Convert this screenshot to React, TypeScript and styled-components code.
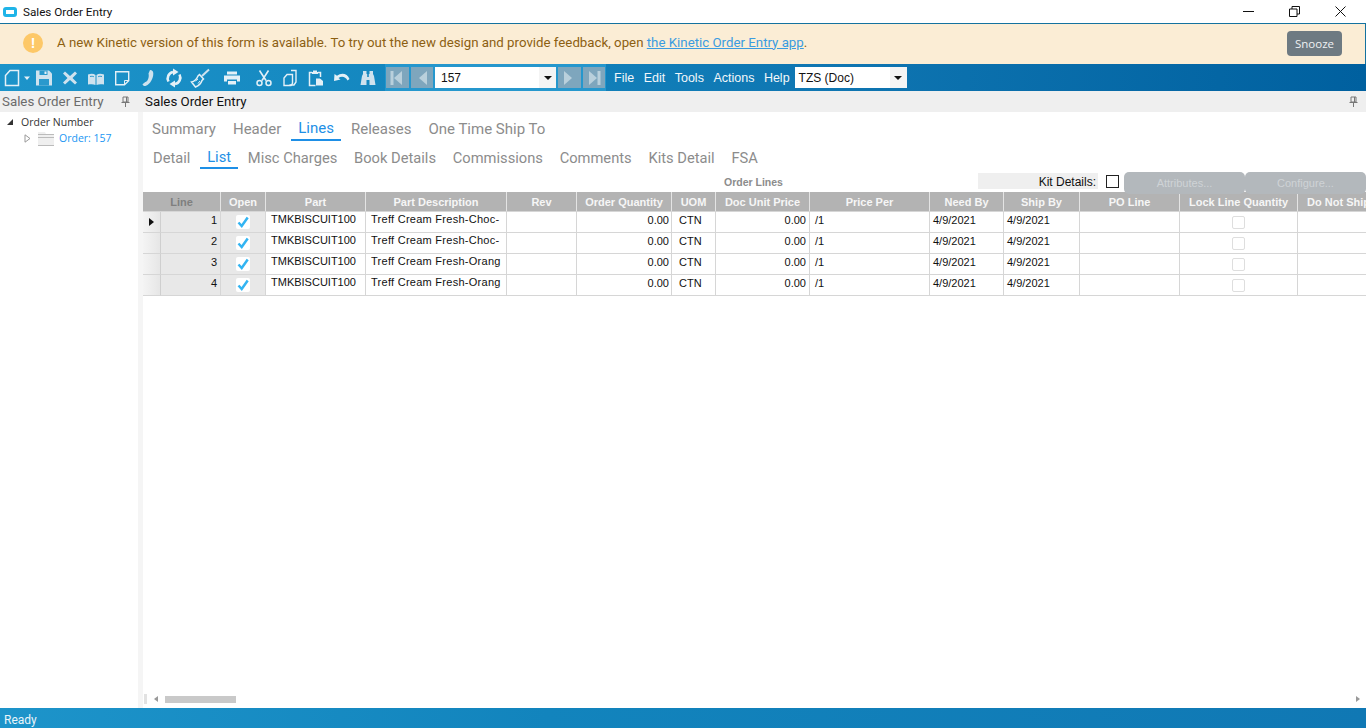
import React from 'react'
import styled, { createGlobalStyle } from 'styled-components'

const GlobalStyle = createGlobalStyle`
  html, body { margin: 0; padding: 0; height: 100%; background: #fff; overflow: hidden; }
  #root { height: 100%; }
`

const uiFont = `Roboto, "Open Sans", sans-serif`
const treeFont = `"Open Sans", "Noto Sans", sans-serif`
const gridFont = `"Liberation Sans", Arial, sans-serif`
const columns = '18px 60px 45px 100px 141px 70px 95px 44px 94px 120px 74px 76px 100px 118px 82px'

const Page = styled.div`
  width: 1366px;
  height: 728px;
  display: flex;
  flex-direction: column;
  overflow: hidden;
  font-family: ${uiFont};
`

const TitleBar = styled.div`
  height: 23px;
  flex: none;
  display: flex;
  align-items: center;
  padding-left: 3px;
  background: #fff;
  border-bottom: 1px solid #14729f;
`
const AppIcon = styled.span`
  width: 14px;
  height: 10px;
  box-sizing: border-box;
  border: 3px solid #1fb4e8;
  border-radius: 3px;
  background: #fff;
  margin-right: 6px;
`
const TitleText = styled.span`
  font-size: 11.7px;
  color: #111;
  flex: 1;
  margin-top: 1px;
`
const WinButtons = styled.div`
  display: flex;
  align-items: center;
  margin-right: 3px;
`
const WinButton = styled.span`
  width: 46px;
  height: 20px;
  display: flex;
  align-items: center;
  justify-content: center;
`

const Banner = styled.div`
  height: 40px;
  flex: none;
  box-sizing: border-box;
  display: flex;
  align-items: center;
  padding: 0 23px 2px 23px;
  background: #fbedd5;
  border-right: 1px solid #14729f;
`
const WarnDot = styled.span`
  width: 20px;
  height: 20px;
  border-radius: 50%;
  background: #fdc868;
  color: #fff;
  font: bold 14px/20px ${gridFont};
  text-align: center;
  margin-right: 14px;
`
const BannerText = styled.span`
  font-size: 13.27px;
  color: #8c5f12;
  flex: 1;
  white-space: nowrap;
  margin-top: -2px;
`
const BannerLink = styled.a`
  color: #3b9ce0;
  text-decoration: underline;
`
const Snooze = styled.button`
  width: 55px;
  height: 25px;
  margin-top: 1px;
  border: 0;
  padding: 0;
  border-radius: 4px;
  background: #6e7a82;
  color: #eef1f3;
  font: 11.5px ${treeFont};
`

const Toolbar = styled.div`
  height: 27px;
  flex: none;
  display: flex;
  align-items: center;
  background: linear-gradient(90deg, #1d94ca 0%, #1284bd 35%, #0f76b2 60%, #00609f 100%);
`
const ToolGroup = styled.div`
  display: flex;
  align-items: center;
  width: 385px;
  padding-left: 2px;
  box-sizing: border-box;
`
const ToolSlot = styled.span<{ $w?: number }>`
  width: ${p => p.$w ?? 26}px;
  height: 27px;
  flex: none;
  display: flex;
  align-items: center;
  justify-content: center;
`
const NavGroup = styled.div`
  width: 221px;
  height: 27px;
  box-sizing: border-box;
  display: flex;
  align-items: center;
  gap: 2px;
  padding: 0 1px;
  background: #2597cd;
`
const NavButton = styled.span`
  width: 22.5px;
  height: 21px;
  display: flex;
  align-items: center;
  justify-content: center;
  background: #7ea6bd;
`
const Combo = styled.div<{ $w: number; $pad?: number }>`
  width: ${p => p.$w}px;
  height: 21px;
  flex: none;
  display: flex;
  align-items: center;
  background: #fff;
  font: 12px ${gridFont};
  color: #111;
  padding-left: ${p => p.$pad ?? 4}px;
  box-sizing: border-box;
`
const ComboText = styled.span`
  flex: 1;
  margin-top: 1px;
`
const ComboArrow = styled.span`
  width: 17px;
  height: 100%;
  display: flex;
  align-items: center;
  justify-content: center;
  background: #f4f4f4;
`
const Caret = styled.i`
  display: block;
  width: 0;
  height: 0;
  border-left: 4px solid transparent;
  border-right: 4px solid transparent;
  border-top: 4px solid #111;
`
const Menu = styled.div`
  display: flex;
  align-items: center;
  margin-left: 8px;
  gap: 9.5px;
  margin-right: 5px;
`
const MenuItem = styled.span`
  margin-top: 1px;
  font: 12.5px ${gridFont};
  color: #f2f7fa;
`

const Panes = styled.div`
  flex: 1;
  min-height: 0;
  display: flex;
  background: #f5f5f5;
`
const LeftPane = styled.div`
  width: 138px;
  flex: none;
  background: #fff;
`
const PaneHead = styled.div`
  height: 21px;
  display: flex;
  align-items: center;
  background: #efefef;
  justify-content: space-between;
`
const PaneTitle = styled.span<{ $dark?: boolean }>`
  font-size: 13.3px;
  color: ${p => (p.$dark ? '#111' : '#6b6b6b')};
  margin-left: ${p => (p.$dark ? 7 : 2)}px;
  white-space: nowrap;
`
const PinSlot = styled.span`
  display: flex;
  margin-right: 8px;
`
const Tree = styled.div`
  padding: 2px 0 0 6px;
  font: 11px/16px ${treeFont};
`
const TreeRow = styled.div<{ $indent?: number }>`
  display: flex;
  align-items: center;
  height: 16px;
  padding-left: ${p => p.$indent ?? 0}px;
  font-size: 10.5px;
  color: #333;
`
const TreeLabel = styled.span<{ $blue?: boolean; $gap: number }>`
  margin-left: ${p => p.$gap}px;
  color: ${p => (p.$blue ? '#2196f3' : '#333')};
`

const MainPane = styled.div`
  width: 1228px;
  flex: none;
  display: flex;
  flex-direction: column;
`
const Content = styled.div`
  flex: 1;
  min-height: 0;
  margin-left: 5px;
  display: flex;
  flex-direction: column;
  background: #fff;
  position: relative;
`
const TabRow = styled.div<{ $pad: number; $top: number; $gap: number }>`
  display: flex;
  height: 29px;
  box-sizing: border-box;
  gap: ${p => p.$gap}px;
  padding: ${p => p.$top}px 0 0 ${p => p.$pad}px;
  align-items: flex-start;
`
const Tab = styled.span<{ $active?: boolean; $low?: boolean }>`
  height: 22px;
  line-height: ${p => 22 + (p.$low ? 2 : 0) + (p.$active ? 0 : 2)}px;
  padding: 0 7px;
  font-size: ${p => (p.$low ? 14.7 : 15)}px;
  white-space: nowrap;
  color: ${p => (p.$active ? '#1e8fe6' : '#8c8c8c')};
  border-bottom: 2px solid ${p => (p.$active ? '#1e8fe6' : 'transparent')};
`
const GridBar = styled.div`
  height: 22px;
  display: flex;
  align-items: center;
  position: relative;
  z-index: 1;
`
const GridTitle = styled.span`
  margin: 1px 0 0 581px;
  width: 254px;
  font: bold 10.5px ${gridFont};
  color: #8c8c8c;
`
const KitLabel = styled.span`
  width: 120px;
  height: 16px;
  box-sizing: border-box;
  padding-right: 2px;
  background: #efefef;
  text-align: right;
  font: 12px/18px ${gridFont};
  color: #111;
`
const KitBox = styled.span`
  width: 13px;
  height: 13px;
  box-sizing: border-box;
  margin: 1px 5px 0 8px;
  border: 1px solid #222;
  background: #fff;
  flex: none;
`
const GreyButton = styled.span`
  width: 121px;
  height: 22px;
  margin-top: 4px;
  flex: none;
  border-radius: 5px;
  background: #b3b8bc;
  color: #cfd3d6;
  font: 11px/22px ${gridFont};
  text-align: center;
`
const GridTable = styled.div`
  width: 1223px;
  overflow: hidden;
  flex: none;
`
const HeadRow = styled.div`
  display: grid;
  grid-template-columns: ${columns};
  height: 20px;
  box-sizing: border-box;
  border-bottom: 1px solid #d6d6d6;
  background: #b3b3b3;
`
const HeadCell = styled.div<{ $span?: number; $dim?: boolean }>`
  grid-column: span ${p => p.$span ?? 1};
  box-sizing: border-box;
  border-right: 1px solid #e4e4e4;
  font: bold 11px/20px ${gridFont};
  color: ${p => (p.$dim ? '#7f7f7f' : '#f6f6f6')};
  text-align: center;
  white-space: nowrap;
  overflow: hidden;
`
const BodyRow = styled.div`
  display: grid;
  grid-template-columns: ${columns};
  height: 21px;
`
const Cell = styled.div<{ $align?: string; $high?: boolean; $pad?: number; $wide?: boolean }>`
  box-sizing: border-box;
  border-right: 1px solid #d6d6d6;
  border-bottom: 1px solid #d6d6d6;
  font: 11px/${p => (p.$high ? 15 : 17)}px ${gridFont};
  letter-spacing: ${p => (p.$wide ? 0.27 : 0)}px;
  color: #111;
  padding: 0 ${p => p.$pad ?? 5}px;
  text-align: ${p => p.$align ?? 'left'};
  white-space: nowrap;
  overflow: hidden;
  display: block;
`
const SelectorCell = styled.div`
  box-sizing: border-box;
  display: flex;
  align-items: center;
  padding-left: 6px;
  background: linear-gradient(90deg, #f4f4f4, #e6e6e6);
  border-right: 1px solid #cfcfcf;
  border-bottom: 1px solid #d6d6d6;
`
const RowArrow = styled.i`
  display: block;
  width: 0;
  height: 0;
  border-top: 4px solid transparent;
  border-bottom: 4px solid transparent;
  border-left: 5px solid #111;
`
const LineCell = styled(Cell)`
  background: #e8e8e8;
  text-align: right;
  padding-right: 3px;
`
const BoxCell = styled.div`
  box-sizing: border-box;
  display: flex;
  align-items: center;
  justify-content: center;
  border-right: 1px solid #d6d6d6;
  border-bottom: 1px solid #d6d6d6;
`
const OpenCell = styled(BoxCell)`
  background: #e8e8e8;
`
const CheckFace = styled.span`
  width: 14px;
  height: 14px;
  display: flex;
  border-radius: 2px;
  background: #fff;
`
const LockBox = styled.span`
  width: 13px;
  height: 13px;
  box-sizing: border-box;
  border: 1px solid #dedede;
  border-radius: 2px;
`
const HScroll = styled.div`
  position: absolute;
  left: 0;
  right: 0;
  bottom: 5px;
  height: 8px;
  display: flex;
  align-items: center;
`
const ScrollCap = styled.span`
  width: 3px;
  height: 10px;
  margin-left: 1px;
  background: #e2e2e2;
`
const ScrollArrow = styled.i<{ $right?: boolean }>`
  display: block;
  width: 0;
  height: 0;
  margin-left: ${p => (p.$right ? 'auto' : '7px')};
  margin-right: ${p => (p.$right ? '6px' : '0')};
  border-top: 3px solid transparent;
  border-bottom: 3px solid transparent;
  ${p => (p.$right ? 'border-left: 4px solid #999;' : 'border-right: 4px solid #999;')}
`
const ScrollThumb = styled.span`
  width: 71px;
  height: 7px;
  margin-left: 7px;
  background: #c9c9c9;
`
const StatusBar = styled.div`
  height: 20px;
  flex: none;
  box-sizing: border-box;
  display: flex;
  align-items: center;
  padding: 3px 0 0 4px;
  background: linear-gradient(90deg, #1d94ca 0%, #1284bd 40%, #1078b4 100%);
  color: #eaf4f9;
  font: 12px ${uiFont};
`

const ico = '#e4f0f7'
const icoDim = '#cfe2ee'

const Svg = ({ w = 18, h = 18, vb = '0 0 18 18', children }: { w?: number; h?: number; vb?: string; children: React.ReactNode }) => (
  <svg width={w} height={h} viewBox={vb} fill="none">
    {children}
  </svg>
)

const toolIcons: { w?: number; el: React.ReactNode }[] = [
  {
    w: 19,
    el: (
      <Svg>
        <path d="M7 1.500h8.500v15H2.500V6.500Z" stroke={ico} strokeWidth="1.500" />
      </Svg>
    ),
  },
  {
    w: 12,
    el: (
      <Svg w={8} h={6} vb="0 0 8 6">
        <path d="M1 1.500h6L4 5Z" fill={ico} />
      </Svg>
    ),
  },
  {
    w: 24,
    el: (
      <Svg vb="1 0 18 18">
        <path d="M1 1.500h13l3 3v12H1Z" fill={icoDim} />
        <path d="M4.500 1.500h8v4.500h-8ZM4 10h10v6.500H4Z" fill="#2a99cd" />
        <path d="M9.500 2.500h2v2.500h-2Z" fill={ico} />
      </Svg>
    ),
  },
  {
    el: (
      <Svg>
        <path d="M4 2.500 9 7l5-4.500 2 2L11.500 9l4.500 4.500-2 2-5-4.500-5 4.500-2-2L6.500 9 2 4.500Z" fill={icoDim} />
      </Svg>
    ),
  },
  {
    el: (
      <Svg>
        <path d="M1 5.500c3-1 5.500-1 7.500.5v10C6.500 15 4 15 1 15.500ZM17 5.500c-3-1-5.500-1-7.500.5v10c2-1 4.500-1 7.500-.5Z" fill={icoDim} />
        <path d="M3 7.500c1.500-.3 3-.3 4 .3M11 7.800c1-.6 2.500-.6 4-.3" stroke="#2a99cd" />
      </Svg>
    ),
  },
  {
    el: (
      <Svg>
        <path d="M2.700 2.700h13v9L11.500 15.700H2.700Z" stroke={ico} strokeWidth="1.400" />
        <path d="M15.500 11.500h-4v4" stroke={ico} />
      </Svg>
    ),
  },
  {
    el: (
      <Svg>
        <path d="M11 1c2.300.3 3.300 1.200 3.300 3.500 0 5-3 10.500-7.300 12.300-1.700.5-3 0-3.500-1.600l2.800-2.200c1.800.2 4.300-4.300 3.200-8.500Z" fill={icoDim} />
      </Svg>
    ),
  },
  {
    el: (
      <Svg w={20} h={20} vb="0 0 20 20">
        <path d="M4.500 13.500A6.500 6.500 0 0 1 9 4" stroke={ico} strokeWidth="2.600" />
        <path d="M9 .5l5.500 3.500L9 7.500Z" fill={ico} />
        <path d="M15.500 6.500A6.500 6.500 0 0 1 11 16" stroke={ico} strokeWidth="2.600" />
        <path d="M11 12.500 5.500 16l5.500 3.500Z" fill={ico} />
      </Svg>
    ),
  },
  {
    el: (
      <Svg w={20} h={20} vb="0 0 20 20">
        <path d="M19 1.500 12 8" stroke={icoDim} strokeWidth="2" />
        <path d="M9.500 6.500 13.500 11l-1.500 1.500c-1 3-4 5.500-6.500 6.500L1.500 14c2.500-.5 5-2.500 6.500-6Z" stroke={ico} strokeWidth="1.500" />
        <path d="M5.500 13 8 11M8 15.500l2-2.500" stroke={ico} />
      </Svg>
    ),
  },
  {
    w: 38,
    el: (
      <Svg>
        <path d="M4 2.500h10v3H4Z" fill={ico} />
        <path d="M1 6.500h16v6h-3V10.500H4v2H1Z" fill={ico} />
        <path d="M5 12h8v3.500H5Z" fill={ico} />
      </Svg>
    ),
  },
  {
    el: (
      <Svg>
        <path d="M4.500 1.500 11 11.500M13.500 1.500 7 11.500" stroke={ico} strokeWidth="1.600" />
        <circle cx="4.500" cy="14" r="2.500" stroke={ico} strokeWidth="1.500" />
        <circle cx="13.500" cy="14" r="2.500" stroke={ico} strokeWidth="1.500" />
      </Svg>
    ),
  },
  {
    el: (
      <Svg>
        <path d="M10 1.500h5v11.500l-2 3H8.500" stroke={ico} strokeWidth="1.400" />
        <path d="M6 5.500h5.500v9L10 16.500H3V9Z" stroke={ico} strokeWidth="1.400" />
      </Svg>
    ),
  },
  {
    el: (
      <Svg>
        <path d="M5 3.500H2.500v13h6M11 3.500h2.500V8" stroke={ico} strokeWidth="1.500" />
        <path d="M6 1.500h4v1.500h1v2H5V3h1Z" fill={ico} />
        <path d="M9 9.500h4l3 2.500v4.500H9Z" fill={ico} />
      </Svg>
    ),
  },
  {
    el: (
      <Svg>
        <path d="M1.500 5 1 12l6.500-1.500L5.500 9c3-2.200 7-1.500 9 2.500L16.500 10C14.500 4.500 8.500 3 4 6.800Z" fill={ico} />
      </Svg>
    ),
  },
  {
    el: (
      <Svg>
        <path d="M4 2h3.500v3H8.200v3h1.600V5h.7V2H14v3l1 2 1.500 9h-6v-5h-3v5h-6l1.500-9 1-2Z" fill={icoDim} />
      </Svg>
    ),
  },
]

const NavIcon = ({ dir, bar }: { dir: 'l' | 'r'; bar?: boolean }) => (
  <Svg w={16} h={18} vb="0 0 16 18">
    {dir === 'l' ? <path d="M13 2v14L5 9Z" fill="#b9d0dc" /> : <path d="M3 2v14l8-7Z" fill="#b9d0dc" />}
    {bar && (dir === 'l' ? <path d="M1.500 2h3v14h-3Z" fill="#b9d0dc" /> : <path d="M11.500 2h3v14h-3Z" fill="#b9d0dc" />)}
  </Svg>
)

const Pin = () => (
  <svg width="9" height="11" viewBox="0 0 9 11" fill="none">
    <path d="M2 1h5v5H2ZM0.500 6.500h8M4.500 7v4M5.500 1v5" stroke="#777" />
  </svg>
)

const CheckMark = () => (
  <svg width="14" height="14" viewBox="0 0 14 14" fill="none">
    <path d="M2.500 7.500 5.700 11 11.700 2.500" stroke="#32b4f2" strokeWidth="2.500" />
  </svg>
)

type Line = { n: number; desc: string }

const lines: Line[] = [
  { n: 1, desc: 'Treff Cream Fresh-Choc-' },
  { n: 2, desc: 'Treff Cream Fresh-Choc-' },
  { n: 3, desc: 'Treff Cream Fresh-Orang' },
  { n: 4, desc: 'Treff Cream Fresh-Orang' },
]

const heads = ['Open', 'Part', 'Part Description', 'Rev', 'Order Quantity', 'UOM', 'Doc Unit Price', 'Price Per', 'Need By', 'Ship By', 'PO Line', 'Lock Line Quantity', 'Do Not Ship']

export default function App() {
  return (
    <Page>
      <GlobalStyle />
      <TitleBar>
        <AppIcon />
        <TitleText>Sales Order Entry</TitleText>
        <WinButtons>
          <WinButton>
            <svg width="11" height="3" viewBox="0 0 11 3"><path d="M0 1.500h11" stroke="#111" /></svg>
          </WinButton>
          <WinButton>
            <svg width="11" height="11" viewBox="0 0 11 11" fill="none"><path d="M.5 3h7.500v7.500H.5ZM3 3V.5h7.500V8H8" stroke="#111" /></svg>
          </WinButton>
          <WinButton>
            <svg width="11" height="11" viewBox="0 0 11 11" fill="none"><path d="M.5.500l10 10M10.500.500l-10 10" stroke="#111" /></svg>
          </WinButton>
        </WinButtons>
      </TitleBar>

      <Banner>
        <WarnDot>!</WarnDot>
        <BannerText>
          A new Kinetic version of this form is available. To try out the new design and provide feedback, open{' '}
          <BannerLink>the Kinetic Order Entry app</BannerLink>.
        </BannerText>
        <Snooze>Snooze</Snooze>
      </Banner>

      <Toolbar>
        <ToolGroup>
          {toolIcons.map((t, i) => (
            <ToolSlot key={i} $w={t.w}>
              {t.el}
            </ToolSlot>
          ))}
        </ToolGroup>
        <NavGroup>
          <NavButton><NavIcon dir="l" bar /></NavButton>
          <NavButton><NavIcon dir="l" /></NavButton>
          <Combo $w={121} $pad={6}>
            <ComboText>157</ComboText>
            <ComboArrow><Caret /></ComboArrow>
          </Combo>
          <NavButton><NavIcon dir="r" /></NavButton>
          <NavButton><NavIcon dir="r" bar /></NavButton>
        </NavGroup>
        <Menu>
          <MenuItem>File</MenuItem>
          <MenuItem>Edit</MenuItem>
          <MenuItem>Tools</MenuItem>
          <MenuItem>Actions</MenuItem>
          <MenuItem>Help</MenuItem>
        </Menu>
        <Combo $w={112}>
          <ComboText>TZS (Doc)</ComboText>
          <ComboArrow><Caret /></ComboArrow>
        </Combo>
      </Toolbar>

      <Panes>
        <LeftPane>
          <PaneHead>
            <PaneTitle>Sales Order Entry</PaneTitle>
            <PinSlot><Pin /></PinSlot>
          </PaneHead>
          <Tree>
            <TreeRow>
              <svg width="8" height="8" viewBox="0 0 8 8"><path d="M7 1v6H1Z" fill="#333" /></svg>
              <TreeLabel $gap={7}>Order Number</TreeLabel>
            </TreeRow>
            <TreeRow $indent={18}>
              <svg width="7" height="9" viewBox="0 0 7 9" fill="none"><path d="M1 .8v7.400l5-3.700Z" stroke="#999" /></svg>
              <svg width="16" height="15" viewBox="0 0 16 15" fill="none" style={{ marginLeft: 7 }}>
                <path d="M0 1h7l1 2h8v12H0Z" fill="#efefef" />
                <path d="M0 3.500h16M0 6.500h16M0 14.500h16" stroke="#bbb" />
              </svg>
              <TreeLabel $blue $gap={5}>Order: 157</TreeLabel>
            </TreeRow>
          </Tree>
        </LeftPane>
        <MainPane>
          <PaneHead>
            <PaneTitle $dark>Sales Order Entry</PaneTitle>
            <PinSlot><Pin /></PinSlot>
          </PaneHead>
          <Content>
            <TabRow $pad={2} $top={5} $gap={3}>
              <Tab>Summary</Tab>
              <Tab>Header</Tab>
              <Tab $active>Lines</Tab>
              <Tab>Releases</Tab>
              <Tab>One Time Ship To</Tab>
            </TabRow>
            <TabRow $pad={3} $top={4} $gap={2.8}>
              <Tab $low>Detail</Tab>
              <Tab $low $active>List</Tab>
              <Tab $low>Misc Charges</Tab>
              <Tab $low>Book Details</Tab>
              <Tab $low>Commissions</Tab>
              <Tab $low>Comments</Tab>
              <Tab $low>Kits Detail</Tab>
              <Tab $low>FSA</Tab>
            </TabRow>
            <GridBar>
              <GridTitle>Order Lines</GridTitle>
              <KitLabel>Kit Details:</KitLabel>
              <KitBox />
              <GreyButton>Attributes...</GreyButton>
              <GreyButton>Configure...</GreyButton>
            </GridBar>
            <GridTable>
              <HeadRow>
                <HeadCell $span={2} $dim>Line</HeadCell>
                {heads.map(h => (
                  <HeadCell key={h}>{h}</HeadCell>
                ))}
              </HeadRow>
              {lines.map(l => (
                <BodyRow key={l.n}>
                  <SelectorCell>{l.n === 1 && <RowArrow />}</SelectorCell>
                  <LineCell>{l.n}</LineCell>
                  <OpenCell>
                    <CheckFace><CheckMark /></CheckFace>
                  </OpenCell>
                  <Cell $high>TMKBISCUIT100</Cell>
                  <Cell $high $wide>{l.desc}</Cell>
                  <Cell />
                  <Cell $align="right" $pad={2}>0.00</Cell>
                  <Cell $pad={7}>CTN</Cell>
                  <Cell $align="right" $pad={3}>0.00</Cell>
                  <Cell>/1</Cell>
                  <Cell $pad={3}>4/9/2021</Cell>
                  <Cell $pad={3}>4/9/2021</Cell>
                  <Cell />
                  <BoxCell><LockBox /></BoxCell>
                  <Cell />
                </BodyRow>
              ))}
            </GridTable>
            <HScroll>
              <ScrollCap />
              <ScrollArrow />
              <ScrollThumb />
              <ScrollArrow $right />
            </HScroll>
          </Content>
        </MainPane>
      </Panes>

      <StatusBar>Ready</StatusBar>
    </Page>
  )
}
